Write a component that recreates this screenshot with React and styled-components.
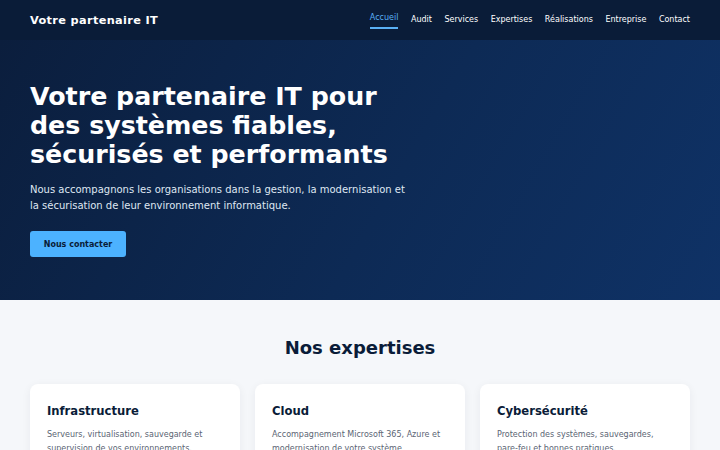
import styled, { createGlobalStyle } from "styled-components";

const GlobalStyle = createGlobalStyle`
  * {
    box-sizing: border-box;
  }

  body {
    margin: 0;
    font-family: "DejaVu Sans", "Noto Sans", sans-serif;
    background: #f5f7fa;
  }
`;

const links = ["Accueil", "Audit", "Services", "Expertises", "Réalisations", "Entreprise", "Contact"];

const expertises = [
  {
    title: "Infrastructure",
    text: "Serveurs, virtualisation, sauvegarde et supervision de vos environnements.",
  },
  {
    title: "Cloud",
    text: "Accompagnement Microsoft 365, Azure et modernisation de votre système d'information.",
  },
  {
    title: "Cybersécurité",
    text: "Protection des systèmes, sauvegardes, pare-feu et bonnes pratiques.",
  },
];

export default function App() {
  return (
    <>
      <GlobalStyle />
      <Header>
        <Logo>Votre partenaire IT</Logo>
        <Nav>
          {links.map((label, i) => (
            <NavLink key={label} $active={i === 0}>
              {label}
            </NavLink>
          ))}
        </Nav>
      </Header>
      <Hero>
        <HeroTitle>
          Votre partenaire IT pour
          <br />
          des systèmes fiables,
          <br />
          sécurisés et performants
        </HeroTitle>
        <HeroText>
          Nous accompagnons les organisations dans la gestion, la modernisation et
          la sécurisation de leur environnement informatique.
        </HeroText>
        <ContactBtn>Nous contacter</ContactBtn>
      </Hero>
      <Section>
        <SectionTitle>Nos expertises</SectionTitle>
        <Cards>
          {expertises.map((e) => (
            <Card key={e.title}>
              <CardTitle>{e.title}</CardTitle>
              <CardText>{e.text}</CardText>
            </Card>
          ))}
        </Cards>
      </Section>
    </>
  );
}

const Header = styled.header`
  height: 40px;
  padding: 0 30px;
  display: flex;
  align-items: center;
  justify-content: space-between;
  background: #0a1c38;
`;

const Logo = styled.div`
  color: #ffffff;
  font-size: 11.3px;
  font-weight: 700;
  letter-spacing: 0.35px;
  margin-top: 1px;
`;

const Nav = styled.nav`
  align-self: flex-start;
  margin-top: 15px;
  display: flex;
  align-items: flex-start;
  gap: 12.5px;
`;

const NavLink = styled.a`
  font-size: 8px;
  line-height: 10px;
  color: ${(p) => (p.$active ? "#5ab0f5" : "#ffffff")};
  padding-bottom: ${(p) => (p.$active ? "4px" : "0")};
  margin-top: ${(p) => (p.$active ? "-2px" : "0")};
  border-bottom: ${(p) => (p.$active ? "2px solid #5ab0f5" : "none")};
  cursor: pointer;
`;

const Hero = styled.section`
  height: 260px;
  padding: 42px 30px 0;
  background: linear-gradient(120deg, #0b1e3d 0%, #0d2a55 55%, #0f3266 100%);
`;

const HeroTitle = styled.h1`
  margin: 0;
  color: #ffffff;
  font-size: 25.3px;
  line-height: 29px;
  font-weight: 700;
`;

const HeroText = styled.p`
  margin: 13px 0 0;
  width: 385px;
  color: #dfe7f2;
  font-size: 10px;
  line-height: 16px;
`;

const ContactBtn = styled.button`
  margin-top: 17px;
  width: 96px;
  height: 26px;
  border: none;
  border-radius: 3px;
  background: #4cb2ff;
  color: #0a1c38;
  font-family: inherit;
  font-size: 8px;
  font-weight: 700;
  cursor: pointer;
`;

const Section = styled.section`
  padding: 37px 30px 40px;
  background: #f5f7fa;
`;

const SectionTitle = styled.h2`
  margin: 0;
  text-align: center;
  color: #0a1c38;
  font-size: 18px;
  line-height: 21px;
  font-weight: 700;
`;

const Cards = styled.div`
  margin-top: 26px;
  display: grid;
  grid-template-columns: repeat(3, 1fr);
  gap: 15px;
`;

const Card = styled.div`
  padding: 20px 17px 20px;
  background: #ffffff;
  border-radius: 8px;
  box-shadow: 0 2px 10px rgba(10, 28, 56, 0.06);
`;

const CardTitle = styled.h3`
  margin: 0;
  color: #0a1c38;
  font-size: 11.6px;
  line-height: 14px;
  font-weight: 700;
`;

const CardText = styled.p`
  margin: 10px 0 0;
  color: #5a6473;
  font-size: 8px;
  line-height: 14px;
`;
